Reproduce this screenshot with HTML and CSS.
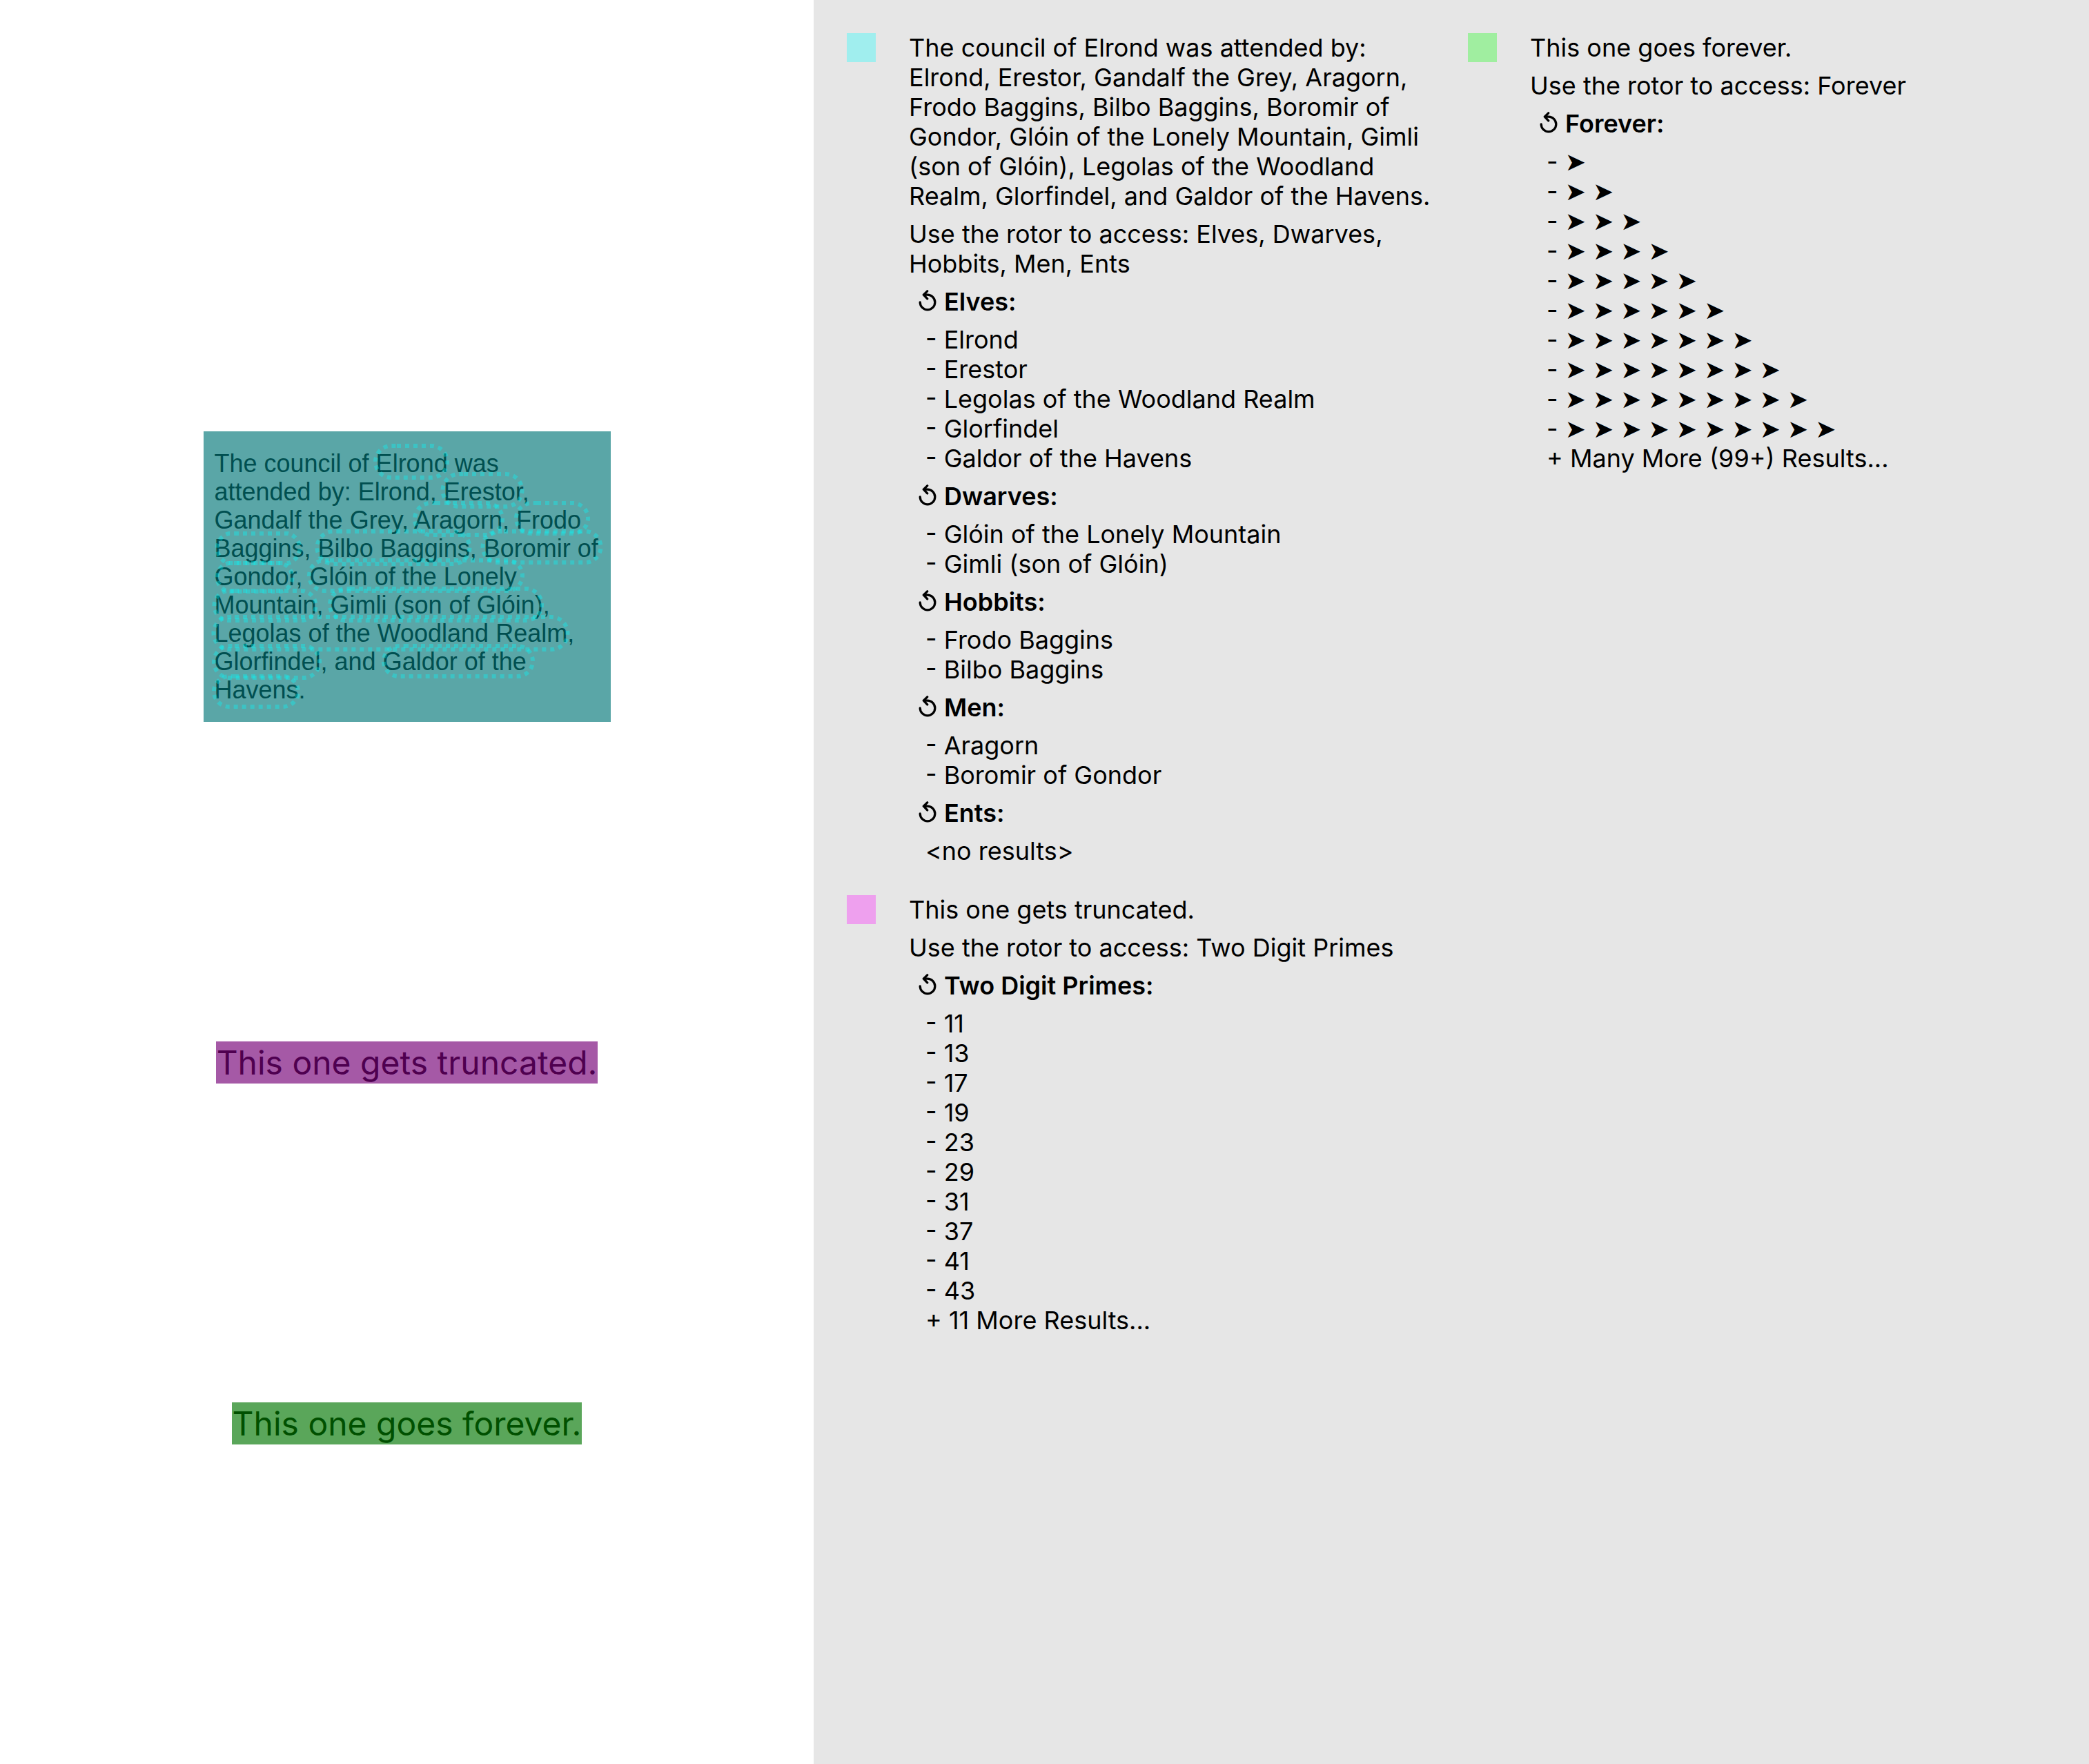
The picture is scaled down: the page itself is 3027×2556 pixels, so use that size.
FILE: index.html
```html
<!DOCTYPE html>
<html lang="en">
<head>
<meta charset="utf-8">
<title>Custom Rotors</title>
<link rel="stylesheet" href="styles.css">
</head>
<body>
<svg class="defs" width="0" height="0" aria-hidden="true">
  <symbol id="rotor" viewBox="0 0 30 36">
    <path d="M4.200 18A10.800 10.800 0 1 0 15 7.200L9.300 7.200M14.700 1.800L9.300 7.200L14.700 12.900" fill="none" stroke="#000" stroke-width="3.300" stroke-linecap="round" stroke-linejoin="round"/>
  </symbol>
</svg>
<div class="page">
  <main class="screen">
    <div class="council">
      <p class="council-text">The council of Elrond was<br>attended by: Elrond, Erestor,<br>Gandalf the Grey, Aragorn, Frodo<br>Baggins, Bilbo Baggins, Boromir of<br>Gondor, Glóin of the Lonely<br>Mountain, Gimli (son of Glóin),<br>Legolas of the Woodland Realm,<br>Glorfindel, and Galdor of the<br>Havens.</p>
      <svg class="outlines" viewBox="0 0 590 421" aria-hidden="true">
        <path d="M280 21H330A23 23 0 0 1 330 67H272A23 23 0 0 1 272 21Z"/>
        <path d="M377 62H438A23 23 0 0 1 438 109H370A23 23 0 0 1 370 62Z"/>
        <path d="M337 104H410A23 23 0 0 1 410 150H329A23 23 0 0 1 329 104Z"/>
        <path d="M483 104H535A22 22 0 0 1 535 148H475A22 22 0 0 1 475 104Z"/>
        <path d="M45 148H122A22 22 0 0 1 122 191H37A22 22 0 0 1 37 148Z"/>
        <path d="M195 145H362A23 23 0 0 1 362 192H188A23 23 0 0 1 188 145Z"/>
        <path d="M435 145H553A22 22 0 0 1 553 190H427A22 22 0 0 1 427 145Z"/>
        <path d="M45 191H112A21 21 0 0 1 112 232H36A21 21 0 0 1 36 191Z"/>
        <path d="M183 187H440A22 22 0 0 1 440 231H175A22 22 0 0 1 175 187Z"/>
        <path d="M45 231H141A21 21 0 0 1 141 274H37A21 21 0 0 1 37 231Z"/>
        <path d="M213 228H467A23 23 0 0 1 467 274H206A23 23 0 0 1 206 228Z"/>
        <path d="M45 269H504A23 23 0 0 1 504 316H38A23 23 0 0 1 38 269Z"/>
        <path d="M45 311H145A23 23 0 0 1 145 357H38A23 23 0 0 1 38 311Z"/>
        <path d="M291 311H455A22 22 0 0 1 455 355H283A22 22 0 0 1 283 311Z"/>
        <path d="M45 355H115A22 22 0 0 1 115 399H37A22 22 0 0 1 37 355Z"/>
      </svg>
    </div>
    <p class="label label-truncated">This one gets truncated.</p>
    <p class="label label-forever">This one goes forever.</p>
  </main>
  <aside class="legend">
    <div class="column">
      <section class="entry">
        <span class="swatch swatch-cyan"></span>
        <div class="details">
          <p>The council of Elrond was attended by:<br>Elrond, Erestor, Gandalf the Grey, Aragorn,<br>Frodo Baggins, Bilbo Baggins, Boromir of<br>Gondor, Glóin of the Lonely Mountain, Gimli<br>(son of Glóin), Legolas of the Woodland<br>Realm, Glorfindel, and Galdor of the Havens.</p>
          <p>Use the rotor to access: Elves, Dwarves,<br>Hobbits, Men, Ents</p>
          <h2><svg class="icon"><use href="#rotor"/></svg>Elves:</h2>
          <ul><li>- Elrond</li><li>- Erestor</li><li>- Legolas of the Woodland Realm</li><li>- Glorfindel</li><li>- Galdor of the Havens</li></ul>
          <h2><svg class="icon"><use href="#rotor"/></svg>Dwarves:</h2>
          <ul><li>- Glóin of the Lonely Mountain</li><li>- Gimli (son of Glóin)</li></ul>
          <h2><svg class="icon"><use href="#rotor"/></svg>Hobbits:</h2>
          <ul><li>- Frodo Baggins</li><li>- Bilbo Baggins</li></ul>
          <h2><svg class="icon"><use href="#rotor"/></svg>Men:</h2>
          <ul><li>- Aragorn</li><li>- Boromir of Gondor</li></ul>
          <h2><svg class="icon"><use href="#rotor"/></svg>Ents:</h2>
          <ul><li>&lt;no results&gt;</li></ul>
        </div>
      </section>
      <section class="entry">
        <span class="swatch swatch-magenta"></span>
        <div class="details">
          <p>This one gets truncated.</p>
          <p>Use the rotor to access: Two Digit Primes</p>
          <h2><svg class="icon"><use href="#rotor"/></svg>Two Digit Primes:</h2>
          <ul><li>- 11</li><li>- 13</li><li>- 17</li><li>- 19</li><li>- 23</li><li>- 29</li><li>- 31</li><li>- 37</li><li>- 41</li><li>- 43</li><li>+ 11 More Results...</li></ul>
        </div>
      </section>
    </div>
    <div class="column">
      <section class="entry">
        <span class="swatch swatch-green"></span>
        <div class="details">
          <p>This one goes forever.</p>
          <p>Use the rotor to access: Forever</p>
          <h2><svg class="icon"><use href="#rotor"/></svg>Forever:</h2>
          <ul><li>- ➤</li><li>- ➤ ➤</li><li>- ➤ ➤ ➤</li><li>- ➤ ➤ ➤ ➤</li><li>- ➤ ➤ ➤ ➤ ➤</li><li>- ➤ ➤ ➤ ➤ ➤ ➤</li><li>- ➤ ➤ ➤ ➤ ➤ ➤ ➤</li><li>- ➤ ➤ ➤ ➤ ➤ ➤ ➤ ➤</li><li>- ➤ ➤ ➤ ➤ ➤ ➤ ➤ ➤ ➤</li><li>- ➤ ➤ ➤ ➤ ➤ ➤ ➤ ➤ ➤ ➤</li><li>+ Many More (99+) Results...</li></ul>
        </div>
      </section>
    </div>
  </aside>
</div>
</body>
</html>
```
FILE: styles.css
```css
* {
  box-sizing: border-box;
}

body,
p,
h2,
ul {
  margin: 0;
  padding: 0;
}

body {
  background: #fff;
  color: #000;
  font-family: Inter, "DejaVu Sans", sans-serif;
  font-size: 36px;
  line-height: 43px;
}

.defs {
  position: absolute;
}

.page {
  display: grid;
  grid-template-columns: 1179fr 1848fr;
  min-height: 100vh;
}

.screen {
  display: flex;
  flex-direction: column;
  align-items: center;
  justify-content: space-evenly;
  padding-top: 162px;
}

.council {
  position: relative;
  width: 590px;
  padding: 26px 16px;
  background: #5aa6a7;
  color: #004f50;
}

.council-text {
  font-family: "Liberation Sans", Arial, sans-serif;
  font-size: 36px;
  line-height: 41px;
  white-space: nowrap;
}

.outlines {
  position: absolute;
  inset: 0;
  width: 100%;
  fill: none;
  stroke: rgba(0, 255, 255, 0.33);
  stroke-width: 6px;
  stroke-dasharray: 6 6;
}

.label {
  padding: 0 1px;
  font-size: 48px;
  line-height: 61px;
  white-space: nowrap;
}

.label-truncated {
  background: #a559a6;
  color: #4f0050;
}

.label-forever {
  background: #5aa65a;
  color: #005000;
}

.legend {
  display: grid;
  grid-template-columns: 1fr 1fr;
  gap: 48px;
  padding: 48px;
  background: #e6e6e6;
}

.column {
  display: flex;
  flex-direction: column;
  gap: 42px;
  min-width: 0;
}

.entry {
  display: flex;
  align-items: flex-start;
  gap: 48px;
}

.swatch {
  flex: none;
  width: 42px;
  height: 42px;
}

.swatch-cyan {
  background: #a0eeee;
}

.swatch-magenta {
  background: #eea0ee;
}

.swatch-green {
  background: #a0eea0;
}

.details {
  display: flex;
  flex-direction: column;
  gap: 12px;
  white-space: nowrap;
}

h2 {
  display: flex;
  align-items: center;
  gap: 9px;
  padding-left: 12px;
  font-size: 36px;
  font-weight: 600;
}

.icon {
  width: 30px;
  height: 36px;
}

ul {
  padding-left: 24px;
  list-style: none;
}
```
